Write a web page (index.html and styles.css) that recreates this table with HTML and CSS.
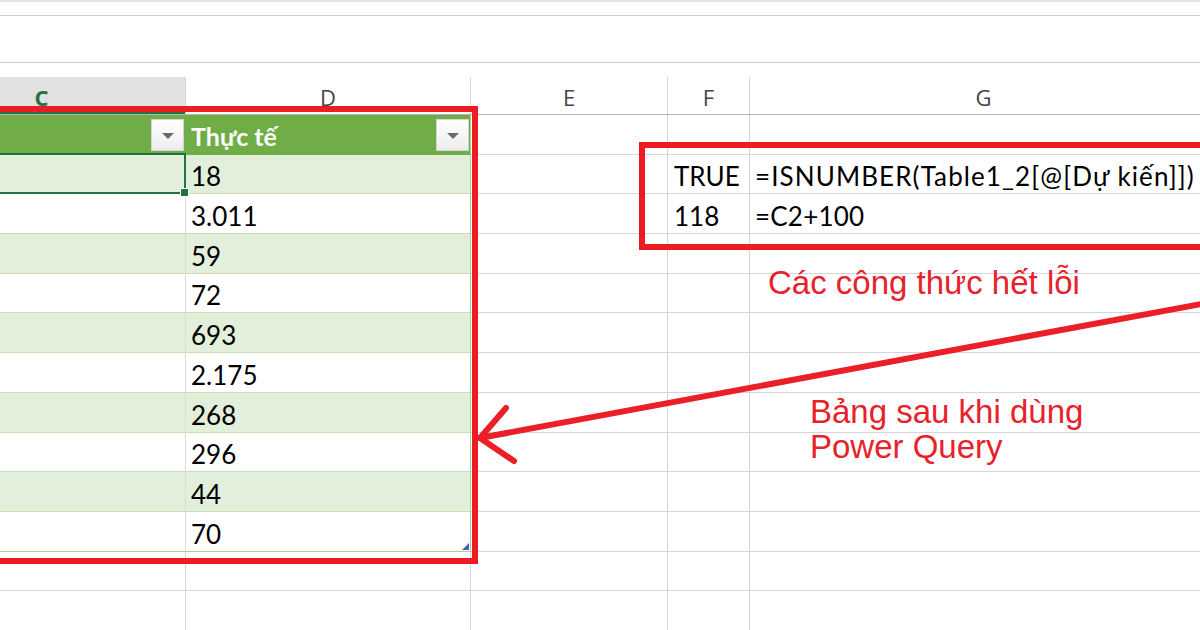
FILE: index.html
```html
<!DOCTYPE html>
<html lang="vi">
<head>
<meta charset="utf-8">
<title>Power Query</title>
<link rel="stylesheet" href="styles.css">
</head>
<body>
<div class="app">
  <div class="ribbon"></div>
  <div class="formula"></div>
  <div class="spacer"></div>
  <div class="colheads">
    <div class="ch sel">C</div>
    <div class="ch">D</div>
    <div class="ch">E</div>
    <div class="ch">F</div>
    <div class="ch">G</div>
  </div>
  <div class="sheet">
    <div class="row">
      <div class="cell t th"><span class="dd"></span></div>
      <div class="cell t th tlast"><span class="thtext">Thực tế</span><span class="dd"></span></div>
      <div class="cell"></div><div class="cell"></div><div class="cell"></div>
    </div>
    <div class="row band">
      <div class="cell t active"></div>
      <div class="cell t tlast">18</div>
      <div class="cell"></div><div class="cell f">TRUE</div><div class="cell g long">=ISNUMBER(Table1_2[@[Dự kiến]])</div>
    </div>
    <div class="row">
      <div class="cell t"></div>
      <div class="cell t tlast">3.011</div>
      <div class="cell"></div><div class="cell f">118</div><div class="cell g">=C2+100</div>
    </div>
    <div class="row band">
      <div class="cell t"></div>
      <div class="cell t tlast">59</div>
      <div class="cell"></div><div class="cell"></div><div class="cell"></div>
    </div>
    <div class="row">
      <div class="cell t"></div>
      <div class="cell t tlast">72</div>
      <div class="cell"></div><div class="cell"></div><div class="cell"></div>
    </div>
    <div class="row band">
      <div class="cell t"></div>
      <div class="cell t tlast">693</div>
      <div class="cell"></div><div class="cell"></div><div class="cell"></div>
    </div>
    <div class="row">
      <div class="cell t"></div>
      <div class="cell t tlast">2.175</div>
      <div class="cell"></div><div class="cell"></div><div class="cell"></div>
    </div>
    <div class="row band">
      <div class="cell t"></div>
      <div class="cell t tlast">268</div>
      <div class="cell"></div><div class="cell"></div><div class="cell"></div>
    </div>
    <div class="row">
      <div class="cell t"></div>
      <div class="cell t tlast">296</div>
      <div class="cell"></div><div class="cell"></div><div class="cell"></div>
    </div>
    <div class="row band">
      <div class="cell t"></div>
      <div class="cell t tlast">44</div>
      <div class="cell"></div><div class="cell"></div><div class="cell"></div>
    </div>
    <div class="row">
      <div class="cell t tbottom"></div>
      <div class="cell t tlast tbottom resize">70</div>
      <div class="cell"></div><div class="cell"></div><div class="cell"></div>
    </div>
    <div class="row">
      <div class="cell"></div><div class="cell"></div><div class="cell"></div><div class="cell"></div><div class="cell"></div>
    </div>
    <div class="row">
      <div class="cell"></div><div class="cell"></div><div class="cell"></div><div class="cell"></div><div class="cell"></div>
    </div>
  </div>

  <div class="hl hl-table"></div>
  <div class="hl hl-formula"></div>

  <svg class="arrow" width="1200" height="630" viewBox="0 0 1200 630">
    <line x1="1212" y1="302" x2="480" y2="438"/>
    <polyline points="506,408 480,438 514,461"/>
  </svg>

  <div class="note note1">Các công thức hết lỗi</div>
  <div class="note note2">Bảng sau khi dùng<br>Power Query</div>
</div>
</body>
</html>
```

FILE: styles.css
```css
* { box-sizing: border-box; margin: 0; padding: 0; }
html, body { width: 1200px; height: 630px; overflow: hidden; background: #fff; }
body { font-family: Lato, "Open Sans", sans-serif; color: #000; }

.app { position: relative; width: 1200px; height: 630px; overflow: hidden; }

.ribbon { height: 16px; border-top: 2px solid #e4e4e4; border-bottom: 1px solid #d0d0d0; }
.formula { height: 47px; border-bottom: 1px solid #c8c8c8; }
.spacer { height: 14px; }

.colheads {
  display: grid;
  grid-template-columns: 288px 285px 197px 82px 1fr;
  margin-left: -102px;
  width: 1320px;
  height: 38px;
  border-bottom: 1px solid #b4b4b4;
}
.ch {
  display: flex;
  align-items: center;
  justify-content: center;
  border-right: 1px solid #d6d6d6;
  font-family: "Open Sans", sans-serif;
  font-size: 22px;
  color: #444;
  padding-top: 2px;
}
.ch.sel {
  background: #e1e1e1;
  color: #217346;
  font-weight: 700;
  box-shadow: inset 0 -3px 0 #217346;
}

.sheet { margin-left: -102px; width: 1320px; }
.row {
  display: grid;
  grid-template-columns: 288px 285px 197px 82px 1fr;
  height: 39.7px;
}
.cell {
  position: relative;
  display: flex;
  align-items: flex-end;
  border-right: 1px solid #d6d6d6;
  border-bottom: 1px solid #d6d6d6;
  padding: 0 0 2px 5px;
  font-size: 26px;
  line-height: 30px;
  white-space: nowrap;
}
.cell.f { padding-left: 6px; }
.cell.g { padding-left: 5px; overflow: visible; letter-spacing: 0.2px; }
.cell.long { letter-spacing: 1.1px; }

.t { background: #fff; border-bottom-color: #c6e0b4; border-right-color: #dadada; }
.band .t { background: #e2efda; }
.t.tlast { border-right-color: #a9d08e; }
.t.tbottom { border-bottom-color: #a9d08e; }

.th {
  background: #70ad47;
  color: #fff;
  font-weight: 700;
  align-items: center;
  padding: 3px 1px 0 5px;
  border-bottom-color: #70ad47;
  border-right-color: #70ad47;
}
.th.tlast { border-right-color: #a9d08e; }
.thtext { flex: 1; font-size: 25px; }

.dd {
  position: relative;
  margin-left: auto;
  width: 33px;
  height: 32px;
  margin-top: -2px;
  background: linear-gradient(#ffffff, #ededed);
  border: 1px solid #d4d4d4;
}
.dd::after {
  content: "";
  position: absolute;
  left: 10px;
  top: 13px;
  border-left: 6px solid transparent;
  border-right: 6px solid transparent;
  border-top: 6px solid #6a6a6a;
}

.active::after {
  content: "";
  position: absolute;
  left: 0;
  right: -1px;
  top: -2px;
  bottom: -1px;
  border: 2px solid #217346;
  border-left: none;
}
.active::before {
  content: "";
  position: absolute;
  right: -4px;
  bottom: -4px;
  width: 7px;
  height: 7px;
  background: #217346;
  border: 1px solid #fff;
  z-index: 2;
}

.resize::after {
  content: "";
  position: absolute;
  right: 1px;
  bottom: 1px;
  width: 0;
  height: 0;
  border-left: 7px solid transparent;
  border-bottom: 7px solid #4a5fb4;
}

.hl { position: absolute; border: 6px solid #ed1c24; }
.hl-table { left: -20px; top: 106px; width: 498px; height: 458px; }
.hl-formula { left: 639px; top: 142px; width: 620px; height: 108px; }

.arrow {
  position: absolute;
  left: 0;
  top: 0;
  fill: none;
  stroke: #ea1f28;
  stroke-width: 6;
  stroke-linecap: round;
  stroke-linejoin: round;
}

.note {
  position: absolute;
  font-family: "Liberation Sans", Arial, sans-serif;
  color: #e8212a;
  font-size: 33px;
  line-height: 35px;
}
.note1 { left: 768px; top: 265px; }
.note2 { left: 810px; top: 394px; }
```
